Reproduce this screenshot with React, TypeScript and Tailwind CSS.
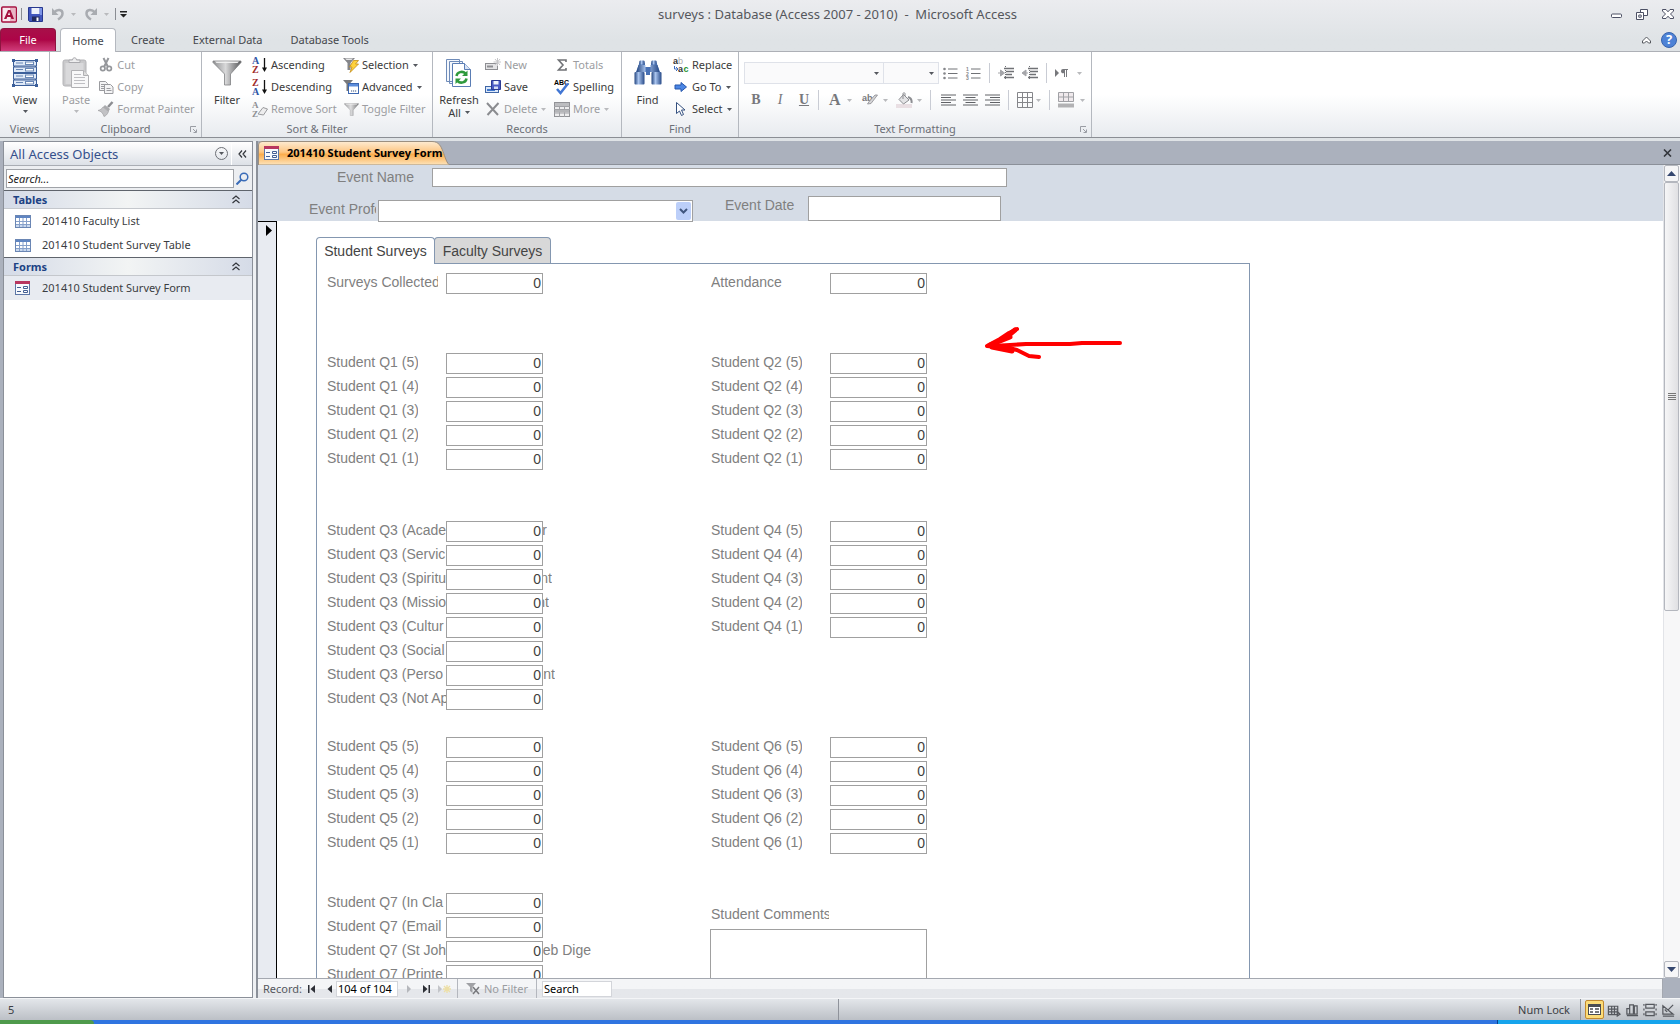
import React, { type ReactNode } from "react";

const ui = "font-['Noto_Sans','Open_Sans',sans-serif]";

/* ---------- small glyphs ---------- */
function Caret({ dim = false }: { dim?: boolean }) {
  return (
    <svg width="5" height="3" viewBox="0 0 5 3" className={dim ? "fill-[#b9babd] shrink-0" : "fill-[#55585e] shrink-0"}>
      <path d="M0 0h5L2.5 3z" />
    </svg>
  );
}

function AccessLogo() {
  return (
    <svg width="16" height="17" viewBox="0 0 16 17">
      <rect x=".75" y="1" width="14.5" height="15" rx="1" fill="#f9e9ee" stroke="#a5113f" strokeWidth="1.5" />
      <path d="M9 2h5.500v13H9z" fill="#e9b6c5" />
      <path d="M3 13L7 4h2.500l3.500 9h-2.600l-.7-2H6.200l-.7 2zM6.900 9h2.200L8.100 6z" fill="#a5113f" />
    </svg>
  );
}

function SaveIcon({ size = 15 }: { size?: number }) {
  return (
    <svg width={size} height={size} viewBox="0 0 15 15">
      <path d="M.5.5h14v14h-13l-1-1z" fill="#4257bd" stroke="#28388f" />
      <path d="M3.500 1h8v6h-8z" fill="#eef2fb" />
      <path d="M12 1h2v7h-2z" fill="#7c94e6" />
      <path d="M4 9.500h7.500V14H4z" fill="#222a5c" />
      <path d="M8.500 10.500h2V14h-2z" fill="#fff" />
    </svg>
  );
}

function UndoIcon({ flip = false }: { flip?: boolean }) {
  return (
    <svg width="14" height="14" viewBox="0 0 14 14" className={flip ? "-scale-x-100" : ""}>
      <path d="M3 5.500C6 2 11.500 2 11.500 6.500c0 3-2 4.500-4.500 6" fill="none" stroke="#a9acb1" strokeWidth="2.500" />
      <path d="M1 1v7h6.500z" fill="#a9acb1" />
    </svg>
  );
}

function ViewIcon() {
  return (
    <svg width="26" height="28" viewBox="0 0 26 28" fill="none" stroke="#3c5f9a">
      <path d="M2.500 1v26M23.500 1v26" strokeWidth="1" />
      {[1.5, 8, 14.500, 21].map((y) => (
        <g key={y}>
          <rect x="1.500" y={y} width="23" height="5.500" fill="#dfe9f7" />
          <path d={`M4 ${y + 2.500}h7`} stroke="#6886b5" />
          <rect x="13.500" y={y + 1.500} width="8" height="2.500" fill="#fff" stroke="#6886b5" />
        </g>
      ))}
      <path d="M0 0h3v3H0zM23 0h3v3h-3zM0 25h3v3H0zM23 25h3v3h-3z" fill="#3c5f9a" stroke="none" />
    </svg>
  );
}

function PasteIcon() {
  return (
    <svg width="28" height="32" viewBox="0 0 28 32">
      <rect x="1" y="3" width="23" height="26" rx="2" fill="#c9c9cb" stroke="#b4b4b7" />
      <rect x="3.500" y="6" width="18" height="21" fill="#d9d9db" />
      <path d="M7 5.500V3h3.500c0-3 4-3 4 0H18v2.500z" fill="#ededee" stroke="#a9a9ad" />
      <path d="M9.500 13.500h12l5 5v12h-17z" fill="#f8f8f9" stroke="#b1b1b4" />
      <path d="M21.500 13.500v5h5" fill="#ddd" stroke="#b1b1b4" />
      <path d="M12 17.500h7M12 20.500h11M12 23.500h11M12 26.500h11" stroke="#bfbfc3" />
    </svg>
  );
}

function CutIcon() {
  return (
    <svg width="16" height="16" viewBox="0 0 16 16" fill="none" stroke="#95979b">
      <path d="M5.500 1l4.500 9M10.500 1L6 10" strokeWidth="2" />
      <circle cx="4.800" cy="11.500" r="2.200" strokeWidth="1.700" />
      <circle cx="11.200" cy="11.500" r="2.200" strokeWidth="1.700" />
    </svg>
  );
}

function CopyIcon() {
  return (
    <svg width="16" height="16" viewBox="0 0 16 16" fill="#f4f4f5" stroke="#9a9b9f">
      <path d="M1.500 2.500h6l2 2v7h-8z" />
      <path d="M3 5.500h4M3 7.500h4M3 9.500h4" />
      <path d="M6.500 5.500h6l2.500 2.500v6.500H6.500z" />
      <path d="M8.500 9.500h4M8.500 11.500h5" />
    </svg>
  );
}

function BrushIcon() {
  return (
    <svg width="16" height="16" viewBox="0 0 16 16">
      <path d="M14.500 1L10 6" stroke="#8c8d91" strokeWidth="2.500" />
      <path d="M7 4l5 4-1.500 2.500L5 6z" fill="#a9aaad" />
      <path d="M5 6l5.500 4.500c-1 3-3 4.500-4.500 5C5 12 3 10 0 9.500 2 9 4 8 5 6z" fill="#c2c2c5" stroke="#a0a1a4" strokeWidth=".7" />
    </svg>
  );
}

function Funnel({ size = 30, dim = false }: { size?: number; dim?: boolean }) {
  return (
    <svg width={size} height={size} viewBox="0 0 30 30">
      <defs>
        <linearGradient id="funnel" x1="0" x2="1">
          <stop offset="0" stopColor="#8d8e90" />
          <stop offset=".45" stopColor="#d9d9da" />
          <stop offset="1" stopColor="#58595b" />
        </linearGradient>
      </defs>
      <path d="M1 3h28v1.500L18.500 16v11h-6V16L1 4.500z" fill="url(#funnel)" stroke="#808184" strokeWidth=".8" opacity={dim ? 0.8 : 1} />
      <path d="M3 3.500h24l-1.500 1.500h-21z" fill="#efefef" />
    </svg>
  );
}

function SortIcon({ top, bottom, topCls, bottomCls }: { top: string; bottom: string; topCls: string; bottomCls: string }) {
  return (
    <svg width="16" height="16" viewBox="0 0 16 16" className="overflow-visible">
      <text x="0" y="7" className={`${topCls} font-['Liberation_Serif',serif] text-[10px] font-bold`}>{top}</text>
      <text x="0" y="16" className={`${bottomCls} font-['Liberation_Serif',serif] text-[10px] font-bold`}>{bottom}</text>
      <path d="M12.500 1v11" stroke="#111" strokeWidth="1.300" />
      <path d="M10 10.500h5l-2.500 4.500z" fill="#111" />
    </svg>
  );
}

function RemoveSortIcon() {
  return (
    <svg width="16" height="16" viewBox="0 0 16 16" className="overflow-visible">
      <text x="0" y="7" className="fill-[#8e8f93] font-['Liberation_Serif',serif] text-[9px] font-bold">A</text>
      <text x="0" y="16" className="fill-[#8e8f93] font-['Liberation_Serif',serif] text-[9px] font-bold">Z</text>
      <path d="M6 13l5-6.500 4.500 1.500-4 6z" fill="#ededee" stroke="#9a9b9e" />
    </svg>
  );
}

function SelectionIcon() {
  return (
    <svg width="16" height="16" viewBox="0 0 16 16">
      <path d="M0 1h12L7.500 6v7h-3V6z" fill="#85868a" />
      <path d="M2 1.500h8L8.500 3h-5z" fill="#e7e7e8" />
      <path d="M10.500 3.500h5L12.500 7h3L7 15.500 9 10H6.500z" fill="#ffd23c" stroke="#c18a14" strokeWidth=".8" />
    </svg>
  );
}

function AdvancedIcon() {
  return (
    <svg width="16" height="16" viewBox="0 0 16 16">
      <path d="M0 1h10L6.500 5v7h-3V5z" fill="#77787b" />
      <rect x="5.500" y="4.500" width="10" height="10" fill="#fff" stroke="#3c67b0" />
      <path d="M6 5h9v2.500H6z" fill="#5c8ddb" />
      <path d="M8 12h1.200M10 12h1.200M12 12h1.200" stroke="#35507e" strokeWidth="1.200" />
    </svg>
  );
}

function RefreshIcon() {
  return (
    <svg width="28" height="30" viewBox="0 0 28 30">
      <path d="M1.500 1.500h13v22h-13zM4.500 3.500h13v22h-13z" fill="#f4f7fc" stroke="#6e8bb8" />
      <path d="M7.500 5.500h12l6 6v17h-18z" fill="#fff" stroke="#5a7db4" />
      <path d="M19.500 5.500v6h6" fill="#d9e4f5" stroke="#5a7db4" />
      <path d="M11.500 18c.5-4 6-5.500 9-2.500M21.500 20.500c-.5 4-6 5.500-9 2.500" fill="none" stroke="#2f9a3c" strokeWidth="2.500" />
      <path d="M22.500 12.500v5.500H17zM10.500 26v-5.500H16z" fill="#2f9a3c" />
    </svg>
  );
}

function NewIcon() {
  return (
    <svg width="16" height="14" viewBox="0 0 16 14">
      <rect x=".5" y="5.500" width="12" height="6" fill="#e4e4e6" stroke="#8e8f93" />
      <path d="M2 8.500h6" stroke="#8e8f93" strokeWidth="2" />
      <path d="M12.500 0v8M8.500 4h8M10 1l5 6M15 1l-5 6" stroke="#c6c6c9" />
    </svg>
  );
}

function SaveRecordIcon() {
  return (
    <svg width="16" height="14" viewBox="0 0 16 14">
      <rect x=".5" y="6.500" width="13" height="6" fill="#dbe8fa" stroke="#3f66a5" />
      <path d="M2 10h8" stroke="#3f77cc" strokeWidth="2" />
      <path d="M6.500.5h9v9h-9z" fill="#4a5bc4" stroke="#2c3a91" />
      <path d="M8.500 1h5v3.500h-5z" fill="#f0f4fb" />
      <path d="M9 6.500h4V9H9z" fill="#d6dcf4" />
    </svg>
  );
}

function DeleteIcon() {
  return (
    <svg width="16" height="14" viewBox="0 0 16 14">
      <path d="M2 1l11 12M13.500 1L2.500 13" stroke="#8b8c90" strokeWidth="2" />
    </svg>
  );
}

function SigmaIcon() {
  return (
    <svg width="16" height="14" viewBox="0 0 16 14">
      <path d="M12 4V2H4.500l4.500 5-4.500 5H12v-2" fill="none" stroke="#707276" strokeWidth="1.600" />
    </svg>
  );
}

function SpellingIcon() {
  return (
    <svg width="16" height="16" viewBox="0 0 16 16" className="overflow-visible">
      <text x="0" y="6" className="fill-black font-['Liberation_Sans',sans-serif] text-[7px] font-bold">ABC</text>
      <path d="M3 10l3.500 4L14 4.500" fill="none" stroke="#4176d4" strokeWidth="2.500" />
    </svg>
  );
}

function MoreIcon() {
  return (
    <svg width="16" height="15" viewBox="0 0 16 15">
      <rect x=".5" y=".5" width="15" height="14" fill="#ededee" stroke="#929397" />
      <path d="M1 1h14v3H1z" fill="#bcbdc0" />
      <path d="M0 4.500h16M0 7.500h16M0 11h16M5.500 4v11M10.500 4v11" stroke="#a1a2a6" />
      <path d="M1 8h14v2.500H1z" fill="#b4b5b8" />
    </svg>
  );
}

function Binoculars() {
  return (
    <svg width="28" height="26" viewBox="0 0 28 26">
      <defs>
        <linearGradient id="tube" x1="0" x2="1">
          <stop offset="0" stopColor="#23457f" />
          <stop offset=".4" stopColor="#a9c4ee" />
          <stop offset="1" stopColor="#274a88" />
        </linearGradient>
      </defs>
      <path d="M6 1h4l1 3v3h6V4l1-3h4l1 3 3 8H16v3h-4v-3H2l3-8z" fill="#4871b5" />
      <rect x="5.500" y=".5" width="5" height="4" rx="1" fill="url(#tube)" />
      <rect x="17.500" y=".5" width="5" height="4" rx="1" fill="url(#tube)" />
      <path d="M4.500 5h7v7h-9zM16.500 5h7l2 7h-9z" fill="url(#tube)" />
      <rect x=".5" y="12" width="10" height="12.500" rx="1" fill="url(#tube)" />
      <rect x="17.500" y="12" width="10" height="12.500" rx="1" fill="url(#tube)" />
    </svg>
  );
}

function ReplaceIcon() {
  return (
    <svg width="16" height="16" viewBox="0 0 16 16" className="overflow-visible">
      <text x="0" y="7" className="fill-[#333] font-['Liberation_Sans',sans-serif] text-[9px] font-bold">a</text>
      <text x="5" y="7" className="fill-[#aaa] font-['Liberation_Sans',sans-serif] text-[9px]">b</text>
      <text x="5" y="15" className="fill-[#333] font-['Liberation_Sans',sans-serif] text-[9px] font-bold">a</text>
      <text x="10.500" y="15" className="fill-[#1e9230] font-['Liberation_Sans',sans-serif] text-[9px] font-bold">c</text>
      <path d="M1.500 9v3h3M3 10l2 2-2 2" fill="none" stroke="#3a6bc0" />
    </svg>
  );
}

function GoToIcon() {
  return (
    <svg width="16" height="12" viewBox="0 0 16 12">
      <path d="M2 4h6V1.500L13.500 6 8 10.500V8H2z" fill="#4b86e4" stroke="#2656ab" />
    </svg>
  );
}

function PointerIcon() {
  return (
    <svg width="16" height="16" viewBox="0 0 16 16">
      <path d="M3.500 1.500v11L6.500 10l2 4.500 2-1L8.500 9h3.500z" fill="#fff" stroke="#34507f" />
    </svg>
  );
}

function Bullets({ numbers = false }: { numbers?: boolean }) {
  return (
    <svg width="15" height="13" viewBox="0 0 15 13" className="overflow-visible">
      <path d="M5 2h9.500M5 6.500h9.500M5 11h9.500" stroke="#707276" />
      {numbers ? (
        <g className="fill-[#85868a] font-['Liberation_Sans',sans-serif] text-[5px] font-bold">
          <text x="0" y="4">1</text>
          <text x="0" y="8.500">2</text>
          <text x="0" y="13">3</text>
        </g>
      ) : (
        <g fill="#85868a"><circle cx="1.500" cy="2" r="1.300" /><circle cx="1.500" cy="6.500" r="1.300" /><circle cx="1.500" cy="11" r="1.300" /></g>
      )}
    </svg>
  );
}

function Indent({ out = false }: { out?: boolean }) {
  return (
    <svg width="16" height="14" viewBox="0 0 16 14">
      <path d="M6 2.500h10M8 5.500h8M8 8.500h6M6 11.500h10" stroke="#707276" strokeWidth="1.400" />
      <path d="M7.500 0v14" stroke="#707276" strokeDasharray="1 1" />
      <path d={out ? "M4 4L0 7l4 3zM3 7h3" : "M2.500 4l4 3-4 3zM0 7h3"} fill="#a4a5a9" stroke="#a4a5a9" />
    </svg>
  );
}

function AlignIcon({ kind }: { kind: "left" | "center" | "right" }) {
  const rows = [1, 3.500, 6, 8.500, 11];
  return (
    <svg width="15" height="12" viewBox="0 0 15 12" stroke="#606266">
      {rows.map((y, i) => {
        const w = i % 2 ? 10 : 15;
        const x = kind === "left" ? 0 : kind === "center" ? (15 - w) / 2 : 15 - w;
        return <path key={y} d={`M${x} ${y}h${w}`} />;
      })}
    </svg>
  );
}

function GridIcon() {
  return (
    <svg width="16" height="16" viewBox="0 0 16 16" fill="none" stroke="#85868a">
      <path d="M.5.5h15v15H.5zM5.500.5v15M10.500.5v15M.5 5.500h15M.5 10.500h15" />
    </svg>
  );
}

function AltRowIcon() {
  return (
    <svg width="16" height="16" viewBox="0 0 16 16">
      <path d="M.5.500h15v9H.5zM5.500.5v9M10.500.5v9M.5 5h15" fill="#efe9ec" stroke="#a0a1a5" />
      <path d="M0 11.500h16v4H0z" fill="#b2b2b4" />
    </svg>
  );
}

function HighlightIcon() {
  return (
    <svg width="17" height="14" viewBox="0 0 17 14" className="overflow-visible">
      <text x="0" y="8" className="fill-[#77787c] font-['Liberation_Sans',sans-serif] text-[9px] font-bold">ab</text>
      <path d="M15.500 2L9 10.500l-3.500.5 2-3L13 2z" fill="#d5d5d7" stroke="#8b8c90" strokeWidth=".8" />
    </svg>
  );
}

function BucketIcon() {
  return (
    <svg width="17" height="16" viewBox="0 0 17 16">
      <path d="M0 12h16v4H0z" fill="#e9dfe3" />
      <path d="M7.500 2.500L13 8l-5.500 4L3 7.500z" fill="#e4e4e6" stroke="#8d8e92" />
      <path d="M7 7V1.500c0-1 2-1 2 0V4" fill="none" stroke="#8d8e92" />
      <path d="M12 5c3 1 4 3 3.500 6" fill="none" stroke="#8d8e92" strokeWidth="2" />
    </svg>
  );
}

function TableIcon() {
  return (
    <svg width="16" height="13" viewBox="0 0 16 13">
      <rect x=".5" y=".5" width="15" height="12" fill="#fff" stroke="#6a86b4" />
      <path d="M1 1h14v2H1z" fill="#5f85c2" />
      <path d="M1 10h14v2H1z" fill="#c9d8ee" />
      <path d="M4.500 3v9M8 3v9M11.500 3v9M1 6.500h14M1 9.500h14" stroke="#86a0ca" />
    </svg>
  );
}

function FormIcon() {
  return (
    <svg width="15" height="14" viewBox="0 0 15 14">
      <rect x=".5" y=".5" width="14" height="13" fill="#f8fafd" stroke="#5c76a6" />
      <path d="M0 0h15v3H0z" fill="#b8365f" />
      <path d="M2 6.500h4M2 10.500h4" stroke="#435f94" />
      <path d="M8.500 5.500h4v2h-4zM8.500 9.500h4v2h-4z" fill="#fff" stroke="#435f94" />
    </svg>
  );
}

function ChevronsUp() {
  return (
    <svg width="8" height="9" viewBox="0 0 8 9" fill="none" stroke="#33363c" strokeWidth="1.200">
      <path d="M.5 4L4 1l3.500 3M.5 8L4 5l3.500 3" />
    </svg>
  );
}

/* ---------- ribbon ---------- */
function SmallCmd({ icon, label, dim = false, caret = false }: { icon: ReactNode; label: string; dim?: boolean; caret?: boolean }) {
  return (
    <button className={`flex h-[22px] items-center gap-[3px] whitespace-nowrap ${dim ? "text-[#9c9da1]" : "text-[#3b3b3b]"}`}>
      <span className="flex w-4 shrink-0 justify-center">{icon}</span>
      <span>{label}</span>
      {caret && <span className="ml-px"><Caret dim={dim} /></span>}
    </button>
  );
}

function BigCmd({ icon, lines, dim = false, caret = "none" }: { icon: ReactNode; lines: string[]; dim?: boolean; caret?: "none" | "below" | "inline" }) {
  return (
    <button className={`flex flex-col items-center ${dim ? "text-[#9c9da1]" : "text-[#3b3b3b]"}`}>
      <span className="mb-0.5 flex h-9 items-center justify-center">{icon}</span>
      {lines.map((l, i) => (
        <span key={l} className="flex items-center gap-1 leading-[13px]">
          {l}
          {caret === "inline" && i === lines.length - 1 && <Caret />}
        </span>
      ))}
      {caret === "below" && <span className="mt-1 flex"><Caret dim={dim} /></span>}
    </button>
  );
}

function Launcher() {
  return (
    <svg width="7" height="7" viewBox="0 0 7 7" fill="none" stroke="#9a9da4" className="absolute right-1 bottom-1">
      <path d="M.5 6V.5H6M3 3l3 3M6.500 3.500v3h-3" />
    </svg>
  );
}

function Group({ title, width, children, launcher = false }: { title: string; width: string; children: ReactNode; launcher?: boolean }) {
  return (
    <section className={`relative flex shrink-0 flex-col border-r border-[#b4b8bf] ${width}`}>
      <div className="flex flex-1 pt-[2px]">{children}</div>
      <h2 className="h-4 text-center leading-4 text-[#6c6f77]">{title}</h2>
      {launcher && <Launcher />}
    </section>
  );
}

function Sep() {
  return <span className="h-5 w-px bg-[#c9ccd4]" />;
}

function Ribbon() {
  return (
    <div className="flex h-[86px] border-b border-[#8b8e94] bg-linear-to-b from-white from-50% to-[#e8ebef]">
      <Group title="Views" width="w-[50px]">
        <div className="pt-px pl-3">
          <BigCmd icon={<ViewIcon />} lines={["View"]} caret="below" />
        </div>
      </Group>
      <Group title="Clipboard" width="w-[152px]" launcher>
        <div className="flex gap-2 pt-px pl-3">
          <BigCmd icon={<PasteIcon />} lines={["Paste"]} dim caret="below" />
        </div>
        <div className="ml-2">
          <SmallCmd icon={<CutIcon />} label="Cut" dim />
          <SmallCmd icon={<CopyIcon />} label="Copy" dim />
          <SmallCmd icon={<BrushIcon />} label="Format Painter" dim />
        </div>
      </Group>
      <Group title="Sort & Filter" width="w-[231px]">
        <div className="pt-px pl-2.5">
          <BigCmd icon={<Funnel />} lines={["Filter"]} />
        </div>
        <div className="ml-2.5 w-[91px]">
          <SmallCmd icon={<SortIcon top="A" bottom="Z" topCls="fill-[#2f56a6]" bottomCls="fill-[#a02b2b]" />} label="Ascending" />
          <SmallCmd icon={<SortIcon top="Z" bottom="A" topCls="fill-[#a02b2b]" bottomCls="fill-[#2f56a6]" />} label="Descending" />
          <SmallCmd icon={<RemoveSortIcon />} label="Remove Sort" dim />
        </div>
        <div>
          <SmallCmd icon={<SelectionIcon />} label="Selection" caret />
          <SmallCmd icon={<AdvancedIcon />} label="Advanced" caret />
          <SmallCmd icon={<Funnel size={15} dim />} label="Toggle Filter" dim />
        </div>
      </Group>
      <Group title="Records" width="w-[189px]">
        <div className="flex w-[52px] justify-center pt-px">
          <BigCmd icon={<RefreshIcon />} lines={["Refresh", "All"]} caret="inline" />
        </div>
        <div className="w-[69px]">
          <SmallCmd icon={<NewIcon />} label="New" dim />
          <SmallCmd icon={<SaveRecordIcon />} label="Save" />
          <SmallCmd icon={<DeleteIcon />} label="Delete" dim caret />
        </div>
        <div>
          <SmallCmd icon={<SigmaIcon />} label="Totals" dim />
          <SmallCmd icon={<SpellingIcon />} label="Spelling" />
          <SmallCmd icon={<MoreIcon />} label="More" dim caret />
        </div>
      </Group>
      <Group title="Find" width="w-[117px]">
        <div className="flex w-[51px] justify-center pt-px">
          <BigCmd icon={<Binoculars />} lines={["Find"]} />
        </div>
        <div>
          <SmallCmd icon={<ReplaceIcon />} label="Replace" />
          <SmallCmd icon={<GoToIcon />} label="Go To" caret />
          <SmallCmd icon={<PointerIcon />} label="Select" caret />
        </div>
      </Group>
      <Group title="Text Formatting" width="w-[353px]" launcher>
        <div className="flex flex-col gap-2 pt-2 pl-[5px]">
          <div className="flex items-center">
            <button aria-label="Font" className="flex h-[22px] w-[140px] items-center justify-end border border-[#dfe2e9] bg-[#fafafb] pr-1"><Caret /></button>
            <button aria-label="Font size" className="-ml-px flex h-[22px] w-[56px] items-center justify-end border border-[#dfe2e9] bg-[#fafafb] pr-1"><Caret /></button>
            <div className="ml-1 flex items-center gap-2">
              <button aria-label="Bullets"><Bullets /></button>
              <button aria-label="Numbering"><Bullets numbers /></button>
              <Sep />
              <button aria-label="Increase indent"><Indent /></button>
              <button aria-label="Decrease indent"><Indent out /></button>
              <Sep />
              <button aria-label="Text direction" className="flex items-center gap-2">
                <svg width="14" height="10" viewBox="0 0 14 10" fill="#77787c"><path d="M0 1l4 4-4 4zM6 3a2 2 0 012-2h5v1h-1v7h-1V2h-1v7H9V5a2 2 0 01-3-2z" /></svg>
                <Caret dim />
              </button>
            </div>
          </div>
          <div className="flex h-4 items-center font-['Liberation_Serif',serif] text-sm text-[#77787c]">
            <button className="w-6 font-bold">B</button>
            <button className="w-6 italic">I</button>
            <button className="mr-0.5 w-6 font-bold underline">U</button>
            <Sep />
            <button aria-label="Font color" className="ml-2.5 flex items-center gap-1.5 text-base font-bold">A<Caret dim /></button>
            <button aria-label="Highlight" className="ml-2.5 flex items-center gap-1"><HighlightIcon /><Caret dim /></button>
            <button aria-label="Fill" className="mr-2 ml-2 flex items-center gap-1"><BucketIcon /><Caret dim /></button>
            <Sep />
            <div className="mr-2 ml-2.5 flex gap-[7px]">
              <button aria-label="Align left"><AlignIcon kind="left" /></button>
              <button aria-label="Center"><AlignIcon kind="center" /></button>
              <button aria-label="Align right"><AlignIcon kind="right" /></button>
            </div>
            <Sep />
            <button aria-label="Gridlines" className="mr-2 ml-2 flex items-center gap-[3px]"><GridIcon /><Caret dim /></button>
            <Sep />
            <button aria-label="Alternate row color" className="ml-2 flex items-center gap-1.5"><AltRowIcon /><Caret dim /></button>
          </div>
        </div>
      </Group>
    </div>
  );
}

/* ---------- top bars ---------- */
function TitleBar() {
  return (
    <header className="grid h-7 grid-cols-[1fr_auto_1fr] items-center pr-1.5 pl-px text-[#55575c]">
      <div className="flex items-center">
        <AccessLogo />
        <span className="mx-1 h-3 w-px bg-[#8a8d93]" />
        <button aria-label="Save" className="ml-0.5"><SaveIcon /></button>
        <button aria-label="Undo" className="ml-2 flex items-center gap-1.5"><UndoIcon /><Caret dim /></button>
        <button aria-label="Redo" className="ml-2 flex items-center gap-1.5"><UndoIcon flip /><Caret dim /></button>
        <span className="mr-1 ml-1.5 h-3 w-px bg-[#8a8d93]" />
        <svg width="7" height="7" viewBox="0 0 7 7"><path d="M0 0h7v1.500H0zM0 3h7L3.500 6.500z" fill="#222" /></svg>
      </div>
      <h1 className="text-[13px]">surveys : Database (Access 2007 - 2010)&nbsp; -&nbsp; Microsoft Access</h1>
      <div className="flex items-center justify-end gap-3.5">
        <button aria-label="Minimize"><svg width="11" height="12" viewBox="0 0 11 12"><rect x=".5" y="6" width="10" height="3.500" rx="1" fill="#fff" stroke="#4c5064" /></svg></button>
        <button aria-label="Restore"><svg width="12" height="11" viewBox="0 0 12 11" fill="#fff" stroke="#4c5064"><path d="M4.500.5h7v6h-7z" /><path d="M.5 3.500h7v7h-7zM2.800 6h2.400v2.200H2.800z" /></svg></button>
        <button aria-label="Close"><svg width="12" height="10" viewBox="0 0 12 10"><path d="M.5.5h3.500L6 2.800 8 .5h3.500v1.500L8.500 5l3 3v1.500H8L6 7.200 4 9.500H.5V8l3-3-3-3z" fill="#fff" stroke="#4c5064" /></svg></button>
      </div>
    </header>
  );
}

function TabBar() {
  return (
    <nav className="flex h-6 items-end border-b border-[#adb0b6] text-[#45474c]">
      <button className="h-[23px] w-14 rounded-t-sm border border-b-0 border-[#8e1440] bg-linear-to-b from-[#a80f49] via-[#ad0447] to-[#d23a7c] text-white">File</button>
      <button className="relative top-px ml-1 h-6 w-14 rounded-t-sm border border-b-0 border-[#b4b8bf] bg-white">Home</button>
      <button className="ml-[15px] h-[23px]">Create</button>
      <button className="ml-7 h-[23px]">External Data</button>
      <button className="ml-7 h-[23px]">Database Tools</button>
      <div className="mr-[3px] ml-auto flex h-[23px] items-center gap-2.5">
        <button aria-label="Collapse ribbon"><svg width="9" height="8" viewBox="0 0 9 8"><path d="M.5 5L4.500 1l4 4v2H6.500L4.500 5 2.500 7H.5z" fill="#fff" stroke="#55585e" /></svg></button>
        <button aria-label="Help" className="flex size-4 items-center justify-center rounded-full border border-[#3763ad] bg-[#4d82d6] text-[13px] leading-none font-bold text-white">?</button>
      </div>
    </nav>
  );
}

/* ---------- navigation pane ---------- */
function NavSection({ title, children }: { title: string; children: ReactNode }) {
  return (
    <section>
      <h3 className="flex h-[19px] items-center justify-between border-t border-b border-t-[#5f646c] border-b-[#c4c7cc] bg-linear-to-r from-[#d5dbe7] via-[#f2f4f4] to-[#d5dbe7] pr-3 pl-[9px] font-bold text-[#1c4284]">
        {title}
        <button aria-label={`Collapse ${title}`}><ChevronsUp /></button>
      </h3>
      {children}
    </section>
  );
}

function NavItem({ icon, label, active = false }: { icon: ReactNode; label: string; active?: boolean }) {
  return (
    <button className={`flex h-6 w-full items-center gap-[11px] pl-[11px] text-[#3b3d42] ${active ? "bg-[#e8ebf1]" : ""}`}>
      <span className="w-4">{icon}</span>
      {label}
    </button>
  );
}

function NavPane() {
  return (
    <aside className="ml-[3px] flex w-[250px] shrink-0 flex-col border border-[#8b9099] bg-white">
      <div className="flex h-[24px] items-center border-b border-[#a9adb4] bg-linear-to-b from-white to-[#dde1e7] pl-1.5 text-[13px] text-[#35508c]">
        <span className="flex-1">All Access Objects</span>
        <button aria-label="Menu" className="flex size-[13px] items-center justify-center rounded-full border border-[#6d7076]"><Caret /></button>
        <button aria-label="Shutter bar" className="ml-[3px] flex h-full w-[21px] items-center justify-center border-l border-white">
          <svg width="9" height="8" viewBox="0 0 9 8" fill="none" stroke="#33363c" strokeWidth="1.200"><path d="M4 .5L1 4l3 3.500M8 .5L5 4l3 3.500" /></svg>
        </button>
      </div>
      <div className="flex h-[24px] items-center bg-[#eceef1] pl-0.5">
        <input aria-label="Search objects" placeholder="Search..." className="h-[19px] w-[228px] border border-[#a0a3a8] bg-white px-px italic placeholder:text-[#222]" />
        <button aria-label="Search" className="ml-0.5">
          <svg width="13" height="13" viewBox="0 0 13 13" fill="none" stroke="#3a6cb8"><circle cx="8" cy="5" r="3.800" strokeWidth="1.500" /><path d="M5.500 7.500l-5 5" strokeWidth="2" /></svg>
        </button>
      </div>
      <NavSection title="Tables">
        <NavItem icon={<TableIcon />} label="201410 Faculty List" />
        <NavItem icon={<TableIcon />} label="201410 Student Survey Table" />
      </NavSection>
      <NavSection title="Forms">
        <NavItem icon={<FormIcon />} label="201410 Student Survey Form" active />
      </NavSection>
    </aside>
  );
}

/* ---------- form ---------- */
type RowData = { id: string; label: string; clip: string; tail?: string; tailClip?: string };

const scored = (q: number): RowData[] =>
  [5, 4, 3, 2, 1].map((n) => ({ id: `q${q}-${n}`, label: `Student Q${q} (${n})`, clip: "w-[91px]" }));

const wide = (id: string, label: string, tail?: string, tailClip?: string): RowData => ({ id, label, clip: "w-full", tail, tailClip });

const q3: RowData[] = [
  wide("q3-a", "Student Q3 (Acade", "r", "w-1"),
  wide("q3-b", "Student Q3 (Servic"),
  wide("q3-c", "Student Q3 (Spiritu", "nt", "w-[9px]"),
  wide("q3-d", "Student Q3 (Missio", "nt", "w-1.5"),
  wide("q3-e", "Student Q3 (Cultur"),
  wide("q3-f", "Student Q3 (Social"),
  wide("q3-g", "Student Q3 (Perso", "ent", "w-3"),
  wide("q3-h", "Student Q3 (Not Ap"),
];

const q7: RowData[] = [
  wide("q7-a", "Student Q7 (In Cla"),
  wide("q7-b", "Student Q7 (Email"),
  wide("q7-c", "Student Q7 (St Joh", "eb Dige", "w-12"),
  wide("q7-d", "Student Q7 (Printe"),
];

function Row({ id, label, clip, tail, tailClip }: RowData) {
  return (
    <div className="grid h-6 grid-cols-[119px_97px_auto] items-start justify-start">
      <label htmlFor={id} className={`overflow-hidden leading-[18px] whitespace-nowrap text-[#808080] ${clip}`}>{label}</label>
      <input id={id} defaultValue="0" className="h-[21px] w-full border border-[#a0a0a0] bg-white pr-px pb-0.5 text-right text-[#3f3f3f]" />
      {tail && <span className={`flex justify-end overflow-hidden leading-[18px] whitespace-nowrap text-[#808080] ${tailClip}`}>{tail}</span>}
    </div>
  );
}

function Block({ rows }: { rows: RowData[] }) {
  return <div>{rows.map((r) => <Row key={r.id} {...r} />)}</div>;
}

function Band({ left, right, gap }: { left: ReactNode; right?: ReactNode; gap: string }) {
  return (
    <div className={`grid grid-cols-[384px_auto] items-start justify-start ${gap}`}>
      {left}
      {right}
    </div>
  );
}

function FormHeader() {
  return (
    <div className="relative z-10 h-14 shrink-0 bg-[#d5dce6] text-[#808080]">
      <div className="flex items-start pt-[3px]">
        <label htmlFor="event-name" className="ml-[79px] w-[95px] leading-[18px]">Event Name</label>
        <input id="event-name" className="h-[19px] w-[575px] border border-[#a0a0a0] bg-white" />
      </div>
      <div className="mt-[9px] flex items-start">
        <label htmlFor="event-prof" className="mt-1 mr-0.5 ml-[51px] w-[67px] overflow-hidden leading-[18px] whitespace-nowrap">Event Profe</label>
        <div className="relative mt-1 h-[22px] w-[315px] border border-[#a0a0a0] bg-white">
          <select id="event-prof" className="h-full w-full appearance-none"><option></option></select>
          <span className="pointer-events-none absolute top-px right-px bottom-px flex w-[15px] items-center justify-center rounded-xs bg-[#bccff9]">
            <svg width="9" height="6" viewBox="0 0 9 6"><path d="M1 1l3.500 3.500L8 1" fill="none" stroke="#40567f" strokeWidth="2" /></svg>
          </span>
        </div>
        <label htmlFor="event-date" className="ml-8 w-[83px] leading-[18px]">Event Date</label>
        <input id="event-date" className="h-[25px] w-[193px] border border-[#a0a0a0] bg-white" />
      </div>
    </div>
  );
}

function SurveyForm() {
  return (
    <div className="flex min-h-0 min-w-0 flex-1 flex-col overflow-hidden bg-white font-['Liberation_Sans',Arial,sans-serif] text-[14px]">
      <FormHeader />
      <div className="flex min-h-0 flex-1">
        <div className="w-[19px] shrink-0 border-t border-r border-black bg-[#e8ebf1] pt-[3px] pl-2">
          <svg width="6" height="11" viewBox="0 0 6 11"><path d="M0 0l6 5.500L0 11z" /></svg>
        </div>
        <div className="relative flex-1 overflow-hidden pt-4 pl-[39px]">
          <div role="tablist" className="relative z-10 flex text-[#444]">
            <button role="tab" aria-selected="true" className="-mb-px h-[27px] w-[119px] rounded-t-sm border border-b-0 border-[#8497b0] bg-white">Student Surveys</button>
            <button role="tab" aria-selected="false" className="-ml-px h-[26px] w-[117px] rounded-t-sm border border-b-0 border-[#8497b0] bg-[#d8d8d8]">Faculty Surveys</button>
          </div>
          <div className="h-[1100px] w-[934px] border border-[#8497b0] pt-[9px] pl-2.5">
            <Band gap="mb-14" left={<Row id="collected" label="Surveys Collected" clip="w-[111px]" />} right={<Row id="attendance" label="Attendance" clip="w-[111px]" />} />
            <Band gap="mb-12" left={<Block rows={scored(1)} />} right={<Block rows={scored(2)} />} />
            <Band gap="mb-6" left={<Block rows={q3} />} right={<Block rows={scored(4)} />} />
            <Band gap="mb-9" left={<Block rows={scored(5)} />} right={<Block rows={scored(6)} />} />
            <Band
              gap="mb-6"
              left={<Block rows={q7} />}
              right={
                <div className="pt-3">
                  <label htmlFor="comments" className="block h-6 w-[118px] overflow-hidden leading-[18px] whitespace-nowrap text-[#808080]">Student Comments</label>
                  <textarea id="comments" className="-ml-px block h-28 w-[217px] resize-none border border-[#a0a0a0] bg-white" />
                </div>
              }
            />
          </div>
          <svg width="142" height="40" viewBox="0 0 142 40" className="absolute top-[103px] left-[705px]" fill="none" stroke="#ff0000" strokeWidth="4" strokeLinecap="round" strokeLinejoin="round">
            <path d="M35 5l-8 4-9 6L5 22l22 2 8 2 12 6 10 1" />
            <path d="M10 22l18-1 16-1h44l12-1h38" />
            <path d="M8 21l20-8M10 23l20 4M33 6l-6 5" strokeWidth="5" />
          </svg>
        </div>
      </div>
    </div>
  );
}

function ScrollBar() {
  return (
    <div className="flex w-[17px] shrink-0 flex-col border-l border-[#e2e4e8] bg-[#f7f7f8] pr-px">
      <button aria-label="Scroll up" className="flex h-[17px] items-center justify-center rounded-xs border border-[#b4b7be] bg-[#f6f6f7]">
        <svg width="9" height="5" viewBox="0 0 9 5" fill="#35476f"><path d="M4.500 0L9 5H0z" /></svg>
      </button>
      <div className="flex flex-[429] flex-col items-center justify-center gap-px rounded-xs border border-[#b4b7be] bg-linear-to-r from-[#f6f6f7] to-[#e0e0e3]">
        <span className="h-px w-2 bg-[#777]" />
        <span className="h-px w-2 bg-[#777]" />
        <span className="h-px w-2 bg-[#777]" />
        <span className="h-px w-2 bg-[#777]" />
      </div>
      <div className="flex-[352]" />
      <button aria-label="Scroll down" className="flex h-[17px] items-center justify-center rounded-xs border border-[#b4b7be] bg-[#f6f6f7]">
        <svg width="9" height="5" viewBox="0 0 9 5" fill="#35476f"><path d="M4.500 5L9 0H0z" /></svg>
      </button>
    </div>
  );
}

function StepIcon({ d, cls = "fill-[#2d2f36]" }: { d: string; cls?: string }) {
  return <svg width="7" height="8" viewBox="0 0 7 8" className={cls}><path d={d} /></svg>;
}

function RecordBar() {
  return (
    <div className={`mr-[17px] flex h-5 shrink-0 items-center border-t border-r border-[#a4a8b0] bg-linear-to-b from-[#f4f5f7] from-50% to-[#e5e7eb] to-50% text-[#55585e] ${ui}`}>
      <label htmlFor="record" className="ml-[5px] w-[45px]">Record:</label>
      <button aria-label="First record"><StepIcon d="M0 0h1.500v8H0zM7 0v8L2.500 4z" /></button>
      <button aria-label="Previous record" className="ml-3"><StepIcon d="M5 0v8L.5 4z" /></button>
      <input id="record" defaultValue="104 of 104" className="ml-0.5 h-4 w-[62px] border border-[#d3d5da] bg-white px-px text-black" />
      <button aria-label="Next record" className="ml-2"><StepIcon cls="fill-[#b5b7bc]" d="M1 0v8l4-4z" /></button>
      <button aria-label="Last record" className="ml-2.5"><StepIcon d="M5.500 0H7v8H5.500zM0 0v8l4.500-4z" /></button>
      <button aria-label="New record" className="ml-2">
        <svg width="13" height="8" viewBox="0 0 13 8"><path d="M0 0v8l4-4z" fill="#c3c5c9" /><path d="M9 0v8M5 4h8M6 1l6 6M12 1L6 7" stroke="#eddfa6" strokeWidth="1.300" /></svg>
      </button>
      <button className="ml-1.5 flex h-full w-20 items-center gap-1 border-r border-l border-[#b4b7be] pl-2 text-[#9a9ca1]">
        <svg width="14" height="13" viewBox="0 0 14 13"><path d="M0 1h10L6.500 5v6L4 9V5z" fill="#a0a1a5" /><path d="M7 5l6 7M13 5l-6 7" stroke="#77787c" strokeWidth="1.500" /></svg>
        No Filter
      </button>
      <input aria-label="Search records" defaultValue="Search" className="ml-[5px] h-4 w-[70px] border border-[#d3d5da] bg-white px-px text-black" />
    </div>
  );
}

function DocArea() {
  return (
    <main className="flex min-w-0 flex-1 flex-col border-l-2 border-[#8b9099]">
      <div className="flex h-6 shrink-0 items-center border-b border-[#8b9099] bg-[#abb1bd]">
        <div className="relative h-6 w-[191px]">
          <svg className="absolute top-0 left-0" width="192" height="24" viewBox="0 0 192 24">
            <defs>
              <linearGradient id="doctab" x1="0" y1="0" x2="0" y2="1">
                <stop offset="0" stopColor="#fdebd2" />
                <stop offset=".45" stopColor="#fdc683" />
                <stop offset=".55" stopColor="#fbad4d" />
                <stop offset="1" stopColor="#fde5bd" />
              </linearGradient>
            </defs>
            <path d="M.5 24V4Q.5.5 4 .5H174c7 0 9 5 11 10s4 13 7 13.500z" fill="url(#doctab)" stroke="#9b8f80" />
          </svg>
          <div className="absolute inset-0 flex items-center gap-2 pl-1.5 font-bold text-black">
            <FormIcon />
            <span>201410 Student Survey Form</span>
          </div>
        </div>
        <button aria-label="Close form" className="mr-2 ml-auto">
          <svg width="9" height="8" viewBox="0 0 9 8"><path d="M1 .5l7 7M8 .5l-7 7" stroke="#33363c" strokeWidth="1.600" /></svg>
        </button>
      </div>
      <div className="relative flex min-h-0 flex-1">
        <div className="flex min-w-0 flex-1">
          <SurveyForm />
          <ScrollBar />
        </div>
      </div>
      <RecordBar />
    </main>
  );
}

/* ---------- bottom ---------- */
const viewIcons = [
  "M1.500 3.500h10v9h-10zM1 6.500h10M1 9.500h10M5 3v10M8 3v10M11 9l3 3-3 2z",
  "M2 6h3v6H2zM5 2h4v10H5zM10 3h3v9h-3zM2 13.500h12",
  "M3 1.500h9v4H3zM3 9.500h9v4H3zM1 1v2M1 6v2M1 11v2M14 1v2M14 6v2M14 11v2",
  "M2 3v9h11zM13 2L6 9l-2-2M2 14h12",
];

function StatusBar() {
  return (
    <footer className="flex h-[22px] shrink-0 items-center border-t border-[#f4f5f7] bg-linear-to-b from-[#e3e6ea] to-[#bcc0c6] text-[#3c3e44]">
      <span className="flex h-full w-[839px] items-center border-r border-[#8f939b] pl-2">5</span>
      <span className="ml-auto pr-[10px]">Num Lock</span>
      <div className="flex h-full items-center gap-0.5 border-l border-[#8f939b] pr-1 pl-1">
        <button aria-label="Form View" className="flex size-[19px] items-center justify-center rounded-xs border border-[#c28a30] bg-[#fcdc78]">
          <svg width="13" height="11" viewBox="0 0 13 11"><rect x=".5" y=".5" width="12" height="10" fill="#fff" stroke="#4b4d52" /><path d="M0 0h13v3H0z" fill="#4b4d52" /><path d="M2 5h3M2 8h3M7 5h4M7 8h4" stroke="#4b4d52" strokeWidth="1.400" /></svg>
        </button>
        {viewIcons.map((d) => (
          <button key={d} aria-label="Change view" className="px-px">
            <svg width="14" height="14" viewBox="0 0 15 15" fill="none" stroke="#55585e" strokeWidth="1.300"><path d={d} /></svg>
          </button>
        ))}
      </div>
    </footer>
  );
}

export default function App() {
  return (
    <div className={`flex h-screen flex-col overflow-hidden bg-linear-to-b from-[#ebecef] to-[#dfe3e6] to-[40px] text-[11px] leading-4 ${ui}`}>
      <TitleBar />
      <TabBar />
      <Ribbon />
      <div className="mt-[3px] flex min-h-0 flex-1 bg-[#abb1bd]">
        <NavPane />
        <div className="w-[3px] shrink-0 bg-[#eef0f3]" />
        <DocArea />
      </div>
      <StatusBar />
      <div className="flex h-1 shrink-0 bg-[#2f74e0]">
        <div className="w-[94px] rounded-tr-sm bg-[#4f9a4c]" />
        <div className="ml-auto w-[183px] border-l border-[#0a3f8a] bg-[#16a4ec]" />
      </div>
    </div>
  );
}
